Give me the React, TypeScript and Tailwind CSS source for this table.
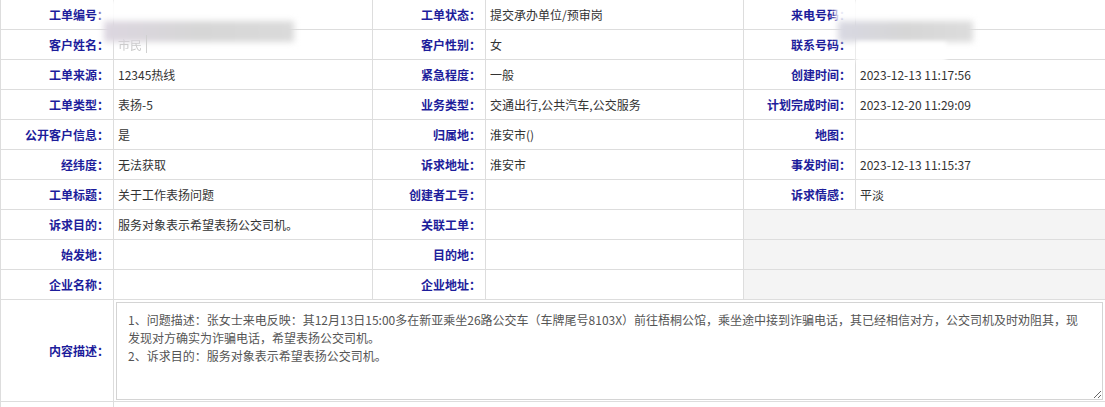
import React from 'react';

type Cell = { label: string; value?: string; muted?: boolean };

const rows: (Cell | null)[][] = [
  [{ label: '工单编号：' }, { label: '工单状态：', value: '提交承办单位/预审岗' }, { label: '来电号码：' }],
  [{ label: '客户姓名：', value: '市民', muted: true }, { label: '客户性别：', value: '女' }, { label: '联系号码：' }],
  [{ label: '工单来源：', value: '12345热线' }, { label: '紧急程度：', value: '一般' }, { label: '创建时间：', value: '2023-12-13 11:17:56' }],
  [{ label: '工单类型：', value: '表扬-5' }, { label: '业务类型：', value: '交通出行,公共汽车,公交服务' }, { label: '计划完成时间：', value: '2023-12-20 11:29:09' }],
  [{ label: '公开客户信息：', value: '是' }, { label: '归属地：', value: '淮安市()' }, { label: '地图：' }],
  [{ label: '经纬度：', value: '无法获取' }, { label: '诉求地址：', value: '淮安市' }, { label: '事发时间：', value: '2023-12-13 11:15:37' }],
  [{ label: '工单标题：', value: '关于工作表扬问题' }, { label: '创建者工号：' }, { label: '诉求情感：', value: '平淡' }],
  [{ label: '诉求目的：', value: '服务对象表示希望表扬公交司机。' }, { label: '关联工单：' }, null],
  [{ label: '始发地：' }, { label: '目的地：' }, null],
  [{ label: '企业名称：' }, { label: '企业地址：' }, null],
];

// line break placed where the original textarea wraps
const content =
  '1、问题描述：张女士来电反映：其12月13日15:00多在新亚乘坐26路公交车（车牌尾号8103X）前往梧桐公馆，乘坐途中接到诈骗电话，其已经相信对方，公交司机及时劝阻其，现\n发现对方确实为诈骗电话，希望表扬公交司机。\n2、诉求目的：服务对象表示希望表扬公交司机。';

const labelCls = 'border border-[#dddddd] text-right pr-1 font-bold text-[12px] text-[#1d1d9b] whitespace-nowrap';
const valueCls = 'border border-[#dddddd] pl-1 text-[12px] text-[#333333] whitespace-nowrap';

export default function App() {
  return (
    <div
      className="relative w-[1105px] h-[407px] overflow-hidden bg-white"
      style={{ fontFamily: '"Noto Sans CJK SC", "Noto Sans", sans-serif' }}
    >
      <table className="w-[1105px] table-fixed border-collapse -mt-px">
        <colgroup>
          <col className="w-[113px]" />
          <col className="w-[259px]" />
          <col className="w-[113px]" />
          <col className="w-[258px]" />
          <col className="w-[112px]" />
          <col className="w-[250px]" />
        </colgroup>
        <tbody>
          {rows.map((row, i) => (
            <tr key={i} className="h-[30px]">
              {row.map((cell, j) =>
                cell ? (
                  <React.Fragment key={j}>
                    <td className={labelCls}>{cell.label}</td>
                    <td className={valueCls}>
                      {cell.muted ? (
                        <span className="text-[#c8c8c8] blur-[0.6px]">{cell.value}</span>
                      ) : (
                        cell.value
                      )}
                    </td>
                  </React.Fragment>
                ) : (
                  <td key={j} colSpan={2} className="border border-[#dddddd] bg-[#f4f4f4]" />
                )
              )}
            </tr>
          ))}
          <tr className="h-[102px]">
            <td className={labelCls}>内容描述：</td>
            <td colSpan={5} className="border border-[#dddddd] px-[2px] py-[1px] align-middle">
              <textarea
                readOnly
                value={content}
                className="block w-full h-[98px] border border-[#d4d4d4] bg-white pt-[8px] pl-[11px] pr-[10px] text-[12px] leading-[18px] text-[#555555] outline-none"
                style={{ fontFamily: '"Noto Sans CJK SC", "Noto Sans", sans-serif' }}
              />
            </td>
          </tr>
          <tr className="h-[30px]">
            <td className={labelCls} />
            <td colSpan={5} className="border border-[#dddddd]" />
          </tr>
        </tbody>
      </table>

      {/* redaction smudges over the masked numbers */}
      <div className="absolute left-[100px] top-0 w-[185px] h-[22px] bg-white/90 blur-[2px]" />
      <div className="absolute left-[104px] top-[21px] w-[190px] h-[21px] bg-gradient-to-r from-[#dcd6e0] via-[#d6d6d6] to-[#dadada] blur-[3px]" />
      <div className="absolute left-[146px] top-[35px] w-px h-[18px] bg-[#d0d0d0]" />
      <div className="absolute left-[835px] top-0 w-[110px] h-[22px] bg-white/90 blur-[2px]" />
      <div className="absolute left-[838px] top-[21px] w-[135px] h-[21px] bg-gradient-to-r from-[#d8d8e2] via-[#d6d6d6] to-[#dcdcdc] blur-[3px]" />
      <div className="absolute left-[856px] top-[42px] w-[90px] h-[20px] bg-white blur-[2px]" />
    </div>
  );
}
